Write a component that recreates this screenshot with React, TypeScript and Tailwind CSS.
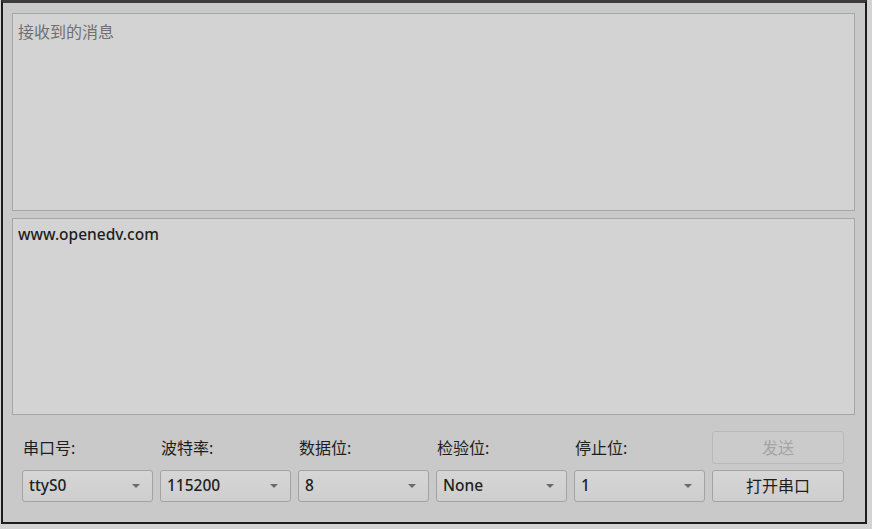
const FONT = '"Noto Sans", "Noto Sans CJK SC", sans-serif';

function Combo({ value }: { value: string }) {
  return (
    <div className="flex h-[32px] w-[131px] items-center justify-between rounded-[3px] border border-[#a3a3a3] bg-gradient-to-b from-[#d6d6d6] to-[#cecece] pl-[6px] pr-[12px] text-[15.5px] font-medium text-[#1e1e1e]">
      <span>{value}</span>
      <svg width="8" height="4" viewBox="0 0 8 4">
        <path d="M0 0 H8 L4 4 Z" fill="#6a6a6a" />
      </svg>
    </div>
  );
}

const LABELS = ['串口号:', '波特率:', '数据位:', '检验位:', '停止位:'];
const VALUES = ['ttyS0', '115200', '8', 'None', '1'];

export default function App() {
  return (
    <div className="h-[529px] w-[872px] bg-[#d3d3d3] overflow-hidden" style={{ fontFamily: FONT }}>
      <div className="flex h-[524px] w-[866px] flex-col border-x-2 border-b-2 border-t-[3px] border-x-[#1c1c1c] border-b-[#1c1c1c] border-t-[#3c3b37] bg-[#c9c9c9] pb-[6px] pl-[9px] pr-[10px] pt-[10px] ml-px">
        <div className="h-[198px] border border-[#a6a6a6] bg-[#d3d3d3] px-[5px] pt-[8px] text-[16px] leading-[20px] text-[#6f6f6f]">
          接收到的消息
        </div>
        <div className="mt-[7px] h-[197px] border border-[#a6a6a6] bg-[#d3d3d3] px-[5px] pt-[5px] text-[15.5px] font-medium leading-[20px] text-[#1e1e1e]">
          www.openedv.com
        </div>
        <div className="mt-[16px] flex gap-[7px] pl-[10px]">
          {LABELS.map((label, i) => (
            <div key={label} className="flex flex-col">
              <div className="flex h-[33px] items-center pl-[1px] text-[16px] text-[#1e1e1e]">{label}</div>
              <div className="mt-[6px]">
                <Combo value={VALUES[i]} />
              </div>
            </div>
          ))}
          <div className="flex flex-col">
            <div className="flex h-[33px] w-[132px] items-center justify-center rounded-[3px] border border-[#b9b9b9] bg-[#cbcbcb] text-[16px] text-[#a4a4a4]">
              发送
            </div>
            <div className="mt-[6px] flex h-[32px] w-[132px] items-center justify-center rounded-[3px] border border-[#a3a3a3] bg-gradient-to-b from-[#d6d6d6] to-[#cecece] text-[16px] text-[#1e1e1e]">
              打开串口
            </div>
          </div>
        </div>
      </div>
    </div>
  );
}
